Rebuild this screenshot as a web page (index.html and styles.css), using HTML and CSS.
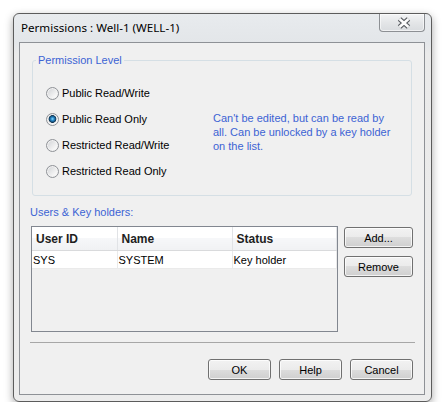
FILE: index.html
```html
<!DOCTYPE html>
<html lang="en">
<head>
    <meta charset="UTF-8">
    <meta name="viewport" content="width=device-width, initial-scale=1.0">
    <title>Permissions</title>
    <link rel="stylesheet" href="styles.css">
</head>
<body>
    <div class="window">
        <div class="titlebar">
            <span class="title">Permissions : Well-1 (WELL-1)</span>
            <button class="close-btn" aria-label="Close">
                <svg width="14" height="12" viewBox="0 0 14 12">
                    <path d="M2.5 2 L11.5 10 M11.5 2 L2.5 10" stroke="#55595e" stroke-width="5" fill="none"/>
                    <path d="M2.5 2 L11.5 10 M11.5 2 L2.5 10" stroke="#fdfdfd" stroke-width="2.6" fill="none"/>
                </svg>
            </button>
        </div>

        <div class="client">
            <fieldset class="level-group">
                <legend>Permission Level</legend>
                <div class="level-body">
                    <div class="radio-list">
                        <label class="radio-row"><input type="radio" name="level">Public Read/Write</label>
                        <label class="radio-row"><input type="radio" name="level" checked>Public Read Only</label>
                        <label class="radio-row"><input type="radio" name="level">Restricted Read/Write</label>
                        <label class="radio-row"><input type="radio" name="level">Restricted Read Only</label>
                    </div>
                    <p class="level-note">Can't be edited, but can be read by<br>all. Can be unlocked by a key holder<br>on the list.</p>
                </div>
            </fieldset>

            <div class="users-label">Users &amp; Key holders:</div>
            <div class="users-row">
                <div class="list-view">
                    <table class="users-table">
                        <colgroup>
                            <col class="col-id">
                            <col class="col-name">
                            <col class="col-status">
                        </colgroup>
                        <thead>
                            <tr><th>User ID</th><th>Name</th><th>Status</th></tr>
                        </thead>
                        <tbody>
                            <tr><td>SYS</td><td>SYSTEM</td><td>Key holder</td></tr>
                        </tbody>
                    </table>
                </div>
                <div class="side-buttons">
                    <button class="btn side-btn">Add...</button>
                    <button class="btn side-btn">Remove</button>
                </div>
            </div>

            <div class="separator"></div>

            <div class="footer-buttons">
                <button class="btn footer-btn">OK</button>
                <button class="btn footer-btn">Help</button>
                <button class="btn footer-btn">Cancel</button>
            </div>
        </div>
    </div>
</body>
</html>
```

FILE: styles.css
```css
body {
    margin: 0;
    background-color: #fff;
    font-family: "Liberation Sans", Arial, sans-serif;
    font-size: 11px;
    color: #000;
}
.window {
    width: 419px;
    height: 389px;
    box-sizing: border-box;
    margin: 13px 0 0 13px;
    padding: 0 6px 6px 5px;
    border: 1px solid #5c5c5c;
    border-radius: 6px;
    background: linear-gradient(#e8ebee, #e3e6e9 28px, #eaeaea 40px, #ececec);
    box-shadow: 0 3px 9px rgba(0, 0, 0, 0.35);
    display: flex;
    flex-direction: column;
}
.titlebar {
    height: 28px;
    display: flex;
    align-items: flex-start;
}
.title {
    font-family: "Noto Sans", sans-serif;
    font-size: 11.6px;
    line-height: 16px;
    margin: 6px 0 0 2px;
    color: #000;
}
.close-btn {
    margin-left: auto;
    width: 46px;
    height: 18px;
    padding: 0;
    border: 1px solid #8d9094;
    border-top: none;
    border-radius: 0 0 4px 4px;
    background: linear-gradient(#f3f4f5, #e4e6e8 50%, #d9dcdf);
    box-shadow: inset 0 0 0 1px rgba(255, 255, 255, 0.6);
    display: flex;
    align-items: center;
    justify-content: center;
}
.close-btn svg {
    display: block;
    margin-left: 3px;
}
.client {
    flex: 1;
    border: 1px solid #8e9196;
    background-color: #f0f0f0;
    padding: 11px 9px 12px 10px;
    display: flex;
    flex-direction: column;
}
.level-group {
    margin: 0 3px 0 2px;
    padding: 13px 12px 11px 13px;
    border: 1px solid #d5dfe5;
    border-radius: 3px;
    min-width: 0;
}
.level-group legend {
    margin-left: -10px;
    padding: 0 2px;
    line-height: 13px;
    color: #3c63d4;
}
.level-body {
    display: grid;
    grid-template-columns: 167px 1fr;
    align-items: center;
}
.radio-row {
    height: 26px;
    display: flex;
    align-items: center;
}
.radio-row input {
    appearance: none;
    width: 13px;
    height: 13px;
    margin: 0 3px 0 0;
    border: 1px solid #8f9297;
    border-radius: 50%;
    background: linear-gradient(135deg, #cfd1d4, #f7f7f7 75%);
    box-shadow: inset 0 0 0 1px #f2f2f2;
}
.radio-row input:checked {
    background:
        radial-gradient(circle at 50% 45%, #8fdcfa 0, #2d8fd0 1.5px, #15507c 3px, #0d2f4a 3.6px, transparent 4.2px),
        linear-gradient(135deg, #cfd1d4, #f7f7f7 75%);
}
.level-note {
    margin: 0;
    line-height: 14px;
    color: #3c63d4;
}
.users-label {
    margin-top: 10px;
    line-height: 13px;
    color: #3c63d4;
}
.users-row {
    margin-top: 7px;
    display: flex;
    align-items: flex-start;
}
.list-view {
    width: 307px;
    height: 106px;
    box-sizing: border-box;
    margin-left: 1px;
    border: 1px solid #828790;
    background-color: #f0f0f0;
}
.users-table {
    width: 305px;
    border-collapse: collapse;
    table-layout: fixed;
}
.col-id {
    width: 85px;
}
.col-name {
    width: 115px;
}
.users-table th {
    height: 23px;
    padding: 0 4px;
    text-align: left;
    font-size: 12px;
    font-weight: bold;
    color: #1e1e1e;
    background: linear-gradient(#ffffff, #ffffff 50%, #f6f7f9 50%, #f0f1f3);
    border-right: 1px solid #e1e3e6;
    border-bottom: 1px solid #d9dadc;
}
.users-table td {
    height: 17px;
    padding: 0 0 0 1px;
    background-color: #fff;
    border-right: 1px solid #eaeaea;
    border-bottom: 1px solid #eaeaea;
}
.side-buttons {
    margin-left: auto;
    margin-right: 2px;
    display: flex;
    flex-direction: column;
    gap: 8px;
    padding-top: 1px;
}
.btn {
    height: 21px;
    padding: 0;
    font-family: "Liberation Sans", Arial, sans-serif;
    font-size: 11px;
    color: #000;
    border: 1px solid #707070;
    border-radius: 3px;
    background: linear-gradient(#f2f2f2, #ebebeb 50%, #dddddd 50%, #cfcfcf);
    box-shadow: inset 0 0 0 1px rgba(255, 255, 255, 0.75);
}
.side-btn {
    width: 69px;
}
.separator {
    margin-top: 10px;
    height: 1px;
    background-color: #a7a7a7;
}
.footer-buttons {
    margin-top: 16px;
    padding-right: 2px;
    display: flex;
    justify-content: flex-end;
    gap: 8px;
}
.footer-btn {
    width: 63px;
}
```
